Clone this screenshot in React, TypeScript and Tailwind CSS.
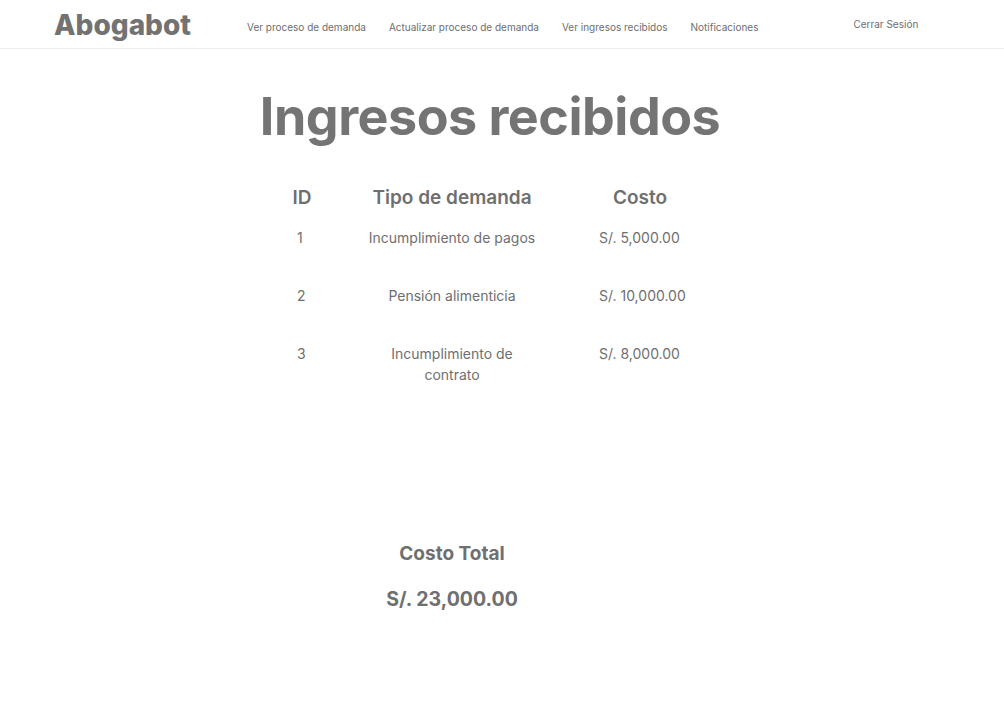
import React from "react";

const rows = [
  { id: "1", tipo: "Incumplimiento de pagos", costo: "S/. 5,000.00" },
  { id: "2", tipo: "Pensión alimenticia", costo: "S/. 10,000.00" },
  { id: "3", tipo: "Incumplimiento de contrato", costo: "S/. 8,000.00" },
];

export default function App() {
  return (
    <div className="min-h-[711px] bg-white text-[#757575] font-['Inter',sans-serif]">
      <nav className="h-[49px] border-b border-[#ececec] flex items-start">
        <div className="ml-[54px] mt-[8px] text-[28px] leading-[34px] font-extrabold text-[#727272] tracking-[0px]">
          Abogabot
        </div>
        <div className="ml-[56px] mt-[20px] flex gap-[23px] text-[10px] leading-[14px] text-[#6e6e6e]">
          <span>Ver proceso de demanda</span>
          <span>Actualizar proceso de demanda</span>
          <span>Ver ingresos recibidos</span>
          <span>Notificaciones</span>
        </div>
        <div className="ml-[95px] mt-[17px] text-[10px] leading-[14px] text-[#6e6e6e]">
          Cerrar Sesión
        </div>
      </nav>

      <div className="flex justify-center pr-[24px] mt-[37px]">
        <h1 className="text-[52px] leading-[62px] font-bold text-[#747474] tracking-[-0.5px]">
          Ingresos recibidos
        </h1>
      </div>

      <div className="ml-[270px] mt-[38px] w-[420px]">
        <div className="flex text-[19px] leading-[24px] font-semibold text-[#6f6f6f]">
          <div className="w-[64px] text-center">ID</div>
          <div className="ml-[28px] w-[180px] text-center">Tipo de demanda</div>
          <div className="ml-[48px] w-[100px] text-center">Costo</div>
        </div>
        <div className="mt-[17px] flex flex-col gap-[16px] text-[14px] leading-[21px] text-[#6f6f6f]">
          {rows.map((r) => (
            <div key={r.id} className="flex min-h-[42px]">
              <div className="w-[64px] pl-[27px]">{r.id}</div>
              <div className="ml-[28px] w-[180px] text-center">{r.tipo}</div>
              <div className="ml-[48px] w-[100px] pl-[9px] whitespace-nowrap">{r.costo}</div>
            </div>
          ))}
        </div>
      </div>

      <div className="ml-[362px] w-[180px] mt-[157px] flex flex-col items-center font-bold text-[#6f6f6f]">
        <div className="text-[19px] leading-[24px]">Costo Total</div>
        <div className="mt-[21px] text-[19.5px] leading-[24px]">S/. 23,000.00</div>
      </div>
    </div>
  );
}
